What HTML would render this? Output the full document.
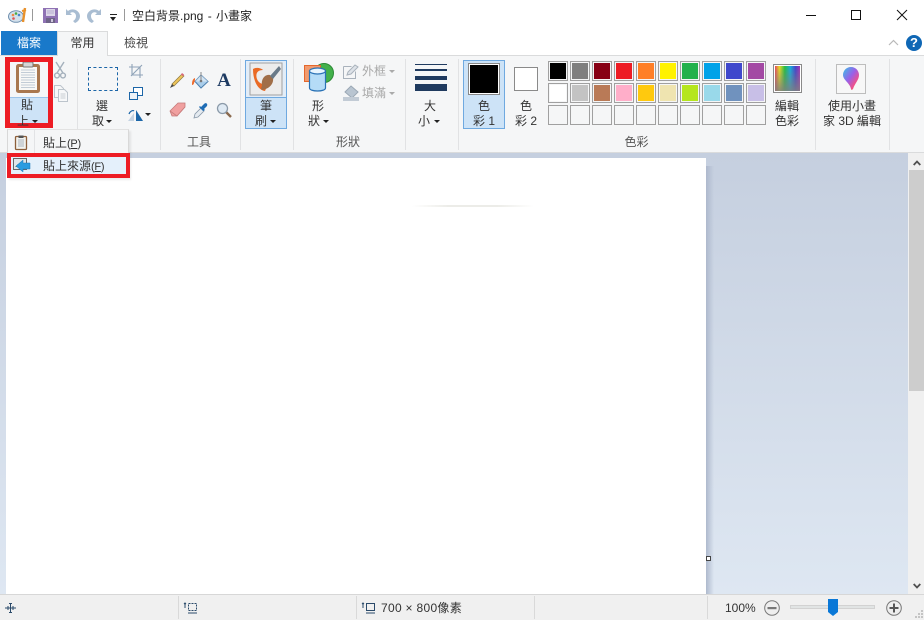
<!DOCTYPE html>
<html lang="zh-Hant"><head><meta charset="utf-8"><title>小畫家</title>
<style>
html,body{margin:0;padding:0;width:924px;height:620px;overflow:hidden;background:#fff}
body{position:relative;font-family:"Liberation Sans","Noto Sans CJK TC",sans-serif;font-size:12px;color:#3c3c3c}
.a{position:absolute}
.t{position:absolute;white-space:nowrap;line-height:16px;text-align:center}
.sep{position:absolute;top:59px;height:91px;width:1px;background:#e1e2e4}
.sw{position:absolute;width:18px;height:18px;border:1px solid #a0a0a0;box-sizing:content-box}
.sw i{position:absolute;left:1px;top:1px;width:16px;height:16px;display:block}
.l{color:#555;text-align:center;position:absolute;top:134px;line-height:16px;white-space:nowrap}
svg{position:absolute;overflow:visible}
.car{position:absolute;width:0;height:0;border-left:3px solid transparent;border-right:3px solid transparent;border-top:3px solid #222}
.p{font-size:11px;letter-spacing:-.3px}
</style></head><body>

<!-- title bar -->
<svg style="left:8px;top:6px" width="20" height="18" viewBox="0 0 20 18"><ellipse cx="8" cy="10.500" rx="7.500" ry="5.800" fill="#d3e0ec" stroke="#6f8fae"/><circle cx="5" cy="9" r="1.300" fill="#e84"/><circle cx="8" cy="7.500" r="1.300" fill="#4a4"/><circle cx="11" cy="9" r="1.300" fill="#48c"/><circle cx="5.500" cy="12.500" r="1.300" fill="#d55"/><path d="M15 16L17 2" stroke="#e8912b" stroke-width="2.400"/><path d="M14 5l4-1" stroke="#e8912b" stroke-width="2"/></svg>
<div class="a" style="left:32px;top:9px;width:1px;height:12px;background:#999"></div>
<svg style="left:43px;top:8px" width="15" height="15" viewBox="0 0 15 15"><rect width="15" height="15" fill="#8f72b4"/><rect x="3" y="1" width="9" height="7" fill="#dcd6e8"/><path d="M4 3h7M4 5h7" stroke="#b8aed0"/><rect x="3" y="10" width="9" height="5" fill="#6f6488"/><rect x="8" y="11" width="2" height="3" fill="#cfc8dc"/></svg>
<svg style="left:65px;top:8px" width="15" height="15" viewBox="0 0 15 15"><path d="M1 1v6h6L5 5c3-2 6 0 6 3 0 2-1 4-3 5l2 2c3-1 5-4 5-7C15 3 8-1 3 3z" fill="#a9bdd2"/></svg>
<svg style="left:87px;top:8px" width="15" height="15" viewBox="0 0 15 15"><path d="M14 1v6H8l2-2C7 3 4 5 4 8c0 2 1 4 3 5l-2 2C2 14 0 11 0 8 0 3 7-1 12 3z" fill="#a9bdd2"/></svg>
<div class="a" style="left:110px;top:14px;width:7px;height:1px;background:#222"></div>
<div class="car" style="left:110px;top:17px;border-left-width:3.500px;border-right-width:3.500px;border-top-width:4px"></div>
<div class="a" style="left:124px;top:9px;width:1px;height:12px;background:#999"></div>
<div class="t" style="left:132px;top:8px;font-size:12px;color:#222;word-spacing:1px">空白背景.png - 小畫家</div>
<svg style="left:806px;top:9px" width="110" height="14" viewBox="0 0 110 14" fill="none" stroke="#111" stroke-width="1"><path d="M0 6.500h10"/><rect x="45.500" y="1.500" width="9" height="9"/><path d="M91 1l10 10M101 1L91 11"/></svg>

<!-- tabs -->
<div class="a" style="left:1px;top:31px;width:56px;height:24px;background:#1979ca"></div>
<div class="t" style="left:1px;top:35px;width:56px;color:#fff;font-size:12px">檔案</div>
<div class="a" style="left:57px;top:31px;width:51px;height:25px;background:#f5f6f7;border:1px solid #dadbdc;border-bottom:0;box-sizing:border-box;z-index:2"></div>
<div class="t" style="left:57px;top:35px;width:51px;color:#333;z-index:3">常用</div>
<div class="t" style="left:108px;top:35px;width:56px;color:#444">檢視</div>
<svg style="left:888px;top:39px" width="11" height="7" viewBox="0 0 11 7" fill="none" stroke="#b9b9b9" stroke-width="1.200"><path d="M1 6l4.500-4.500L10 6"/></svg>
<div class="a" style="left:906px;top:35px;width:16px;height:16px;border-radius:50%;background:#0f67b5;color:#fff;font:bold 13px/16px 'Liberation Sans',sans-serif;text-align:center">?</div>

<!-- ribbon -->
<div class="a" style="left:0;top:55px;width:924px;height:98px;background:#f5f6f7;border-top:1px solid #dadbdc;border-bottom:1px solid #dadbdc;box-sizing:border-box"></div>
<div class="sep" style="left:77px"></div><div class="sep" style="left:160px"></div><div class="sep" style="left:240px"></div><div class="sep" style="left:293px"></div><div class="sep" style="left:405px"></div><div class="sep" style="left:458px"></div><div class="sep" style="left:815px"></div><div class="sep" style="left:889px"></div>

<!-- paste -->
<div class="a" style="left:10px;top:97px;width:39px;height:30px;background:#cde3f7"></div>
<div class="a" style="left:10px;top:97px;width:39px;height:1px;background:#9cc4ea"></div>
<svg style="left:16px;top:62px" width="24" height="31" viewBox="0 0 24 31"><rect y="2" width="24" height="29" rx="2.500" fill="#a9774e"/><rect x="3" y="5" width="18" height="23" fill="#f8f8f6"/><path d="M5 8h14M5 10.500h14M5 13h14M5 15.500h14M5 18h14M5 20.500h14M5 23h14M5 25.500h14" stroke="#c2ccd6"/><rect x="7" y="0" width="10" height="5" rx="1" fill="#d6d6d6" stroke="#777"/></svg>
<div class="t" style="left:10px;top:97px;width:34px;color:#333">貼</div>
<div class="t" style="left:6px;top:113px;width:34px;color:#333;z-index:7">上</div>
<div class="car" style="left:32px;top:120px;z-index:7"></div>
<!-- red box -->
<div class="a" style="left:5px;top:57px;width:48px;height:71px;border:5px solid #ed1c24;box-sizing:border-box;z-index:6"></div>
<svg style="left:54px;top:62px" width="12" height="17" viewBox="0 0 12 17" fill="none" stroke="#a4b0bc" stroke-width="1.400"><path d="M2 0l7 11M10 0L3 11"/><circle cx="3" cy="13.500" r="2.400"/><circle cx="9" cy="13.500" r="2.400"/></svg>
<svg style="left:54px;top:85px" width="14" height="17" viewBox="0 0 14 17" fill="#f7f8f9" stroke="#bcc4cc"><path d="M.5.5h6l3 3v9h-9z"/><path d="M4.500 4.500h6l3 3v9h-9z"/><path d="M6.500 9h5M6.500 11h5M6.500 13h5" stroke="#c9ced4"/></svg>

<!-- select -->
<div class="a" style="left:88px;top:67px;width:30px;height:24px;border:1px dashed #1c66a8;box-sizing:border-box"></div>
<div class="t" style="left:85px;top:98px;width:34px;color:#333">選</div>
<div class="t" style="left:81px;top:113px;width:34px;color:#333">取</div>
<div class="car" style="left:106px;top:120px"></div>
<svg style="left:129px;top:64px" width="14" height="14" viewBox="0 0 14 14" fill="none" stroke="#8fa3b8" stroke-width="1.100"><path d="M0 3h11v11M3 0v11h11M2 12L13 1"/></svg>
<svg style="left:129px;top:87px" width="14" height="13" viewBox="0 0 14 13"><rect x="4.500" y=".5" width="9" height="8" fill="#fff" stroke="#1c66a8"/><rect x=".5" y="5.500" width="8" height="7" fill="#eef3f8" stroke="#1c66a8"/></svg>
<svg style="left:128px;top:109px" width="16" height="12" viewBox="0 0 16 12"><path d="M8 1l7 11H8z" fill="#1c66a8"/><path d="M6 4L0 12h6z" fill="#c4d3e2"/><path d="M1 5C2 2 5 1 6 2" fill="none" stroke="#1c66a8" stroke-width="1.200"/></svg>
<div class="car" style="left:145px;top:113px"></div>

<!-- tools -->
<svg style="left:169px;top:72px" width="16" height="17" viewBox="0 0 16 17"><path d="M3 12L13 2l2 2L5 14z" fill="#edc45a" stroke="#8d7a40" stroke-width=".7"/><path d="M12 2.500l1-1.500 2 1.500-1 2z" fill="#d9687b"/><path d="M3 12l-2 4 4-2z" fill="#444"/></svg>
<svg style="left:191px;top:71px" width="18" height="18" viewBox="0 0 18 18"><path d="M10 4l7 6.500-7 6.500-6-6.500z" fill="#a9cdea" stroke="#4c7fae"/><path d="M4 10.500L10 4h0l7 6.500z" fill="#e6f0f8" opacity=".7"/><path d="M10 10V1" stroke="#888"/><circle cx="10" cy="10" r="1.300" fill="#777"/><path d="M4 7C1 8 1 12 1 14c2 0 2-2 3-5z" fill="#ef6a2b"/></svg>
<div class="a" style="left:216px;top:70px;width:16px;font:bold 19px/21px 'Liberation Serif',serif;color:#1d3a62;text-align:center">A</div>
<svg style="left:169px;top:102px" width="17" height="15" viewBox="0 0 17 15"><path d="M1 9L9 1h7l0 4-8 9H3z" fill="#f0a0a0" stroke="#c47a7a" stroke-width=".8"/><path d="M1 9l7 5 8-9" fill="none" stroke="#c97c7c" stroke-width=".8"/></svg>
<svg style="left:193px;top:102px" width="16" height="17" viewBox="0 0 16 17"><path d="M1 16l1-4 6-6 3 3-6 6z" fill="#e4eaf0" stroke="#8797a8" stroke-width=".8"/><path d="M8 5l3-3c2-2 4 0 3 2l-3 3 1 1-2 1-4-4 1-1z" fill="#1e6cb5"/></svg>
<svg style="left:216px;top:102px" width="16" height="16" viewBox="0 0 16 16"><path d="M10 10l5 5" stroke="#8a6a4f" stroke-width="2.400"/><circle cx="6.500" cy="6.500" r="5" fill="#dfeaf4" stroke="#8b9aa9" stroke-width="1.300"/></svg>

<!-- brushes -->
<div class="a" style="left:245px;top:60px;width:42px;height:69px;background:#cde3f7;border:1px solid #6fa9e0;box-sizing:border-box"></div>
<div class="a" style="left:246px;top:61px;width:40px;height:36px;background:#e2edf8;border-bottom:1px solid #6fa9e0"></div>
<svg style="left:250px;top:63px" width="32" height="32" viewBox="0 0 32 32"><rect width="32" height="32" fill="#ececec" stroke="#a0a0a0"/><path d="M3 6C6 4 11 5 13 7 8 7 5 10 7 16c2 5 7 6 11 5l-3 7C8 27 3 18 3 6z" fill="#ea6a24"/><path d="M12 22c-1-6 3-11 8-10l3 3c1 6-4 11-11 12-2-1 0-3 0-5z" fill="#a06e48"/><path d="M20 13L29 3l2 3-8 10z" fill="#6a7a88"/></svg>
<div class="t" style="left:246px;top:98px;width:40px;color:#333">筆</div>
<div class="t" style="left:241px;top:113px;width:40px;color:#333">刷</div>
<div class="car" style="left:270px;top:120px"></div>

<!-- shapes -->
<svg style="left:304px;top:62px" width="30" height="30" viewBox="0 0 30 30"><circle cx="20" cy="11" r="9.500" fill="#43b14b" stroke="#2c8a36"/><rect x=".5" y="3.500" width="16" height="16" fill="#f19a6e" stroke="#e5672c"/><path d="M5.500 9v17c0 4 16 4 16 0V9z" fill="#b5dcf7" stroke="#2a72b5" stroke-width="1.200"/><ellipse cx="13.500" cy="9" rx="8" ry="3" fill="#e8f5fe" stroke="#2a72b5" stroke-width="1.200"/></svg>
<div class="t" style="left:301px;top:98px;width:34px;color:#333">形</div>
<div class="t" style="left:297px;top:113px;width:34px;color:#333">狀</div>
<div class="car" style="left:323px;top:120px"></div>
<svg style="left:343px;top:64px" width="16" height="15" viewBox="0 0 16 15" fill="none" stroke="#a9b2bc"><path d="M.5 2.500h8M.5 2.500v12h12v-7"/><path d="M4 11l1-3 7-7 3 2-7 7z" fill="#dde2e8"/></svg>
<div class="t" style="left:362px;top:63px;color:#a8a8a8">外框</div>
<div class="car" style="left:389px;top:70px;border-top-color:#aaa"></div>
<svg style="left:343px;top:85px" width="16" height="16" viewBox="0 0 16 16"><path d="M8 1l7 6-6 6-7-6z" fill="#b9c5d1" stroke="#9aa7b4"/><rect y="12" width="16" height="4" fill="#c2cbd5"/></svg>
<div class="t" style="left:362px;top:85px;color:#a8a8a8">填滿</div>
<div class="car" style="left:389px;top:92px;border-top-color:#aaa"></div>

<!-- size -->
<div class="a" style="left:415px;top:64px;width:32px;height:1px;background:#1f3a5f"></div>
<div class="a" style="left:415px;top:69px;width:32px;height:2px;background:#1f3a5f"></div>
<div class="a" style="left:415px;top:76px;width:32px;height:4px;background:#1f3a5f"></div>
<div class="a" style="left:415px;top:84px;width:32px;height:7px;background:#1f3a5f"></div>
<div class="t" style="left:413px;top:98px;width:34px;color:#333">大</div>
<div class="t" style="left:407px;top:113px;width:34px;color:#333">小</div>
<div class="car" style="left:434px;top:120px"></div>

<!-- colors -->
<div class="a" style="left:463px;top:60px;width:42px;height:69px;background:#cde3f7;border:1px solid #6fa9e0;box-sizing:border-box"></div>
<div class="a" style="left:468px;top:63px;width:32px;height:32px;background:#000;border:1px solid #888;outline:1px solid #fff;outline-offset:-2px;box-sizing:border-box"></div>
<div class="t" style="left:463px;top:98px;width:42px;color:#333">色</div>
<div class="t" style="left:463px;top:113px;width:42px;color:#333">彩 1</div>
<div class="a" style="left:514px;top:67px;width:24px;height:24px;background:#fff;border:1px solid #8a8a8a;box-sizing:border-box"></div>
<div class="t" style="left:505px;top:98px;width:42px;color:#333">色</div>
<div class="t" style="left:505px;top:113px;width:42px;color:#333">彩 2</div>

<div class="sw" style="left:548px;top:61px"><i style="background:#000"></i></div><div class="sw" style="left:570px;top:61px"><i style="background:#7f7f7f"></i></div><div class="sw" style="left:592px;top:61px"><i style="background:#880015"></i></div><div class="sw" style="left:614px;top:61px"><i style="background:#ed1c24"></i></div><div class="sw" style="left:636px;top:61px"><i style="background:#ff7f27"></i></div><div class="sw" style="left:658px;top:61px"><i style="background:#fff200"></i></div><div class="sw" style="left:680px;top:61px"><i style="background:#22b14c"></i></div><div class="sw" style="left:702px;top:61px"><i style="background:#00a2e8"></i></div><div class="sw" style="left:724px;top:61px"><i style="background:#3f48cc"></i></div><div class="sw" style="left:746px;top:61px"><i style="background:#a349a4"></i></div>
<div class="sw" style="left:548px;top:83px"><i style="background:#fff"></i></div><div class="sw" style="left:570px;top:83px"><i style="background:#c3c3c3"></i></div><div class="sw" style="left:592px;top:83px"><i style="background:#b97a57"></i></div><div class="sw" style="left:614px;top:83px"><i style="background:#ffaec9"></i></div><div class="sw" style="left:636px;top:83px"><i style="background:#ffc90e"></i></div><div class="sw" style="left:658px;top:83px"><i style="background:#efe4b0"></i></div><div class="sw" style="left:680px;top:83px"><i style="background:#b5e61d"></i></div><div class="sw" style="left:702px;top:83px"><i style="background:#99d9ea"></i></div><div class="sw" style="left:724px;top:83px"><i style="background:#7092be"></i></div><div class="sw" style="left:746px;top:83px"><i style="background:#c8bfe7"></i></div>
<div class="sw" style="left:548px;top:105px"></div><div class="sw" style="left:570px;top:105px"></div><div class="sw" style="left:592px;top:105px"></div><div class="sw" style="left:614px;top:105px"></div><div class="sw" style="left:636px;top:105px"></div><div class="sw" style="left:658px;top:105px"></div><div class="sw" style="left:680px;top:105px"></div><div class="sw" style="left:702px;top:105px"></div><div class="sw" style="left:724px;top:105px"></div><div class="sw" style="left:746px;top:105px"></div>

<div class="a" style="left:773px;top:64px;width:29px;height:29px;border:1px solid #8a8a8a;box-sizing:border-box;background:linear-gradient(to bottom,rgba(128,128,128,0) 0,rgba(128,128,128,.9) 100%),linear-gradient(to right,#e81c6a,#f0e020,#20c040,#10b0e0,#4040d0,#c030b0);outline:1px solid #fff;outline-offset:-2px"></div>
<div class="t" style="left:767px;top:98px;width:40px;color:#333">編輯</div>
<div class="t" style="left:767px;top:113px;width:40px;color:#333">色彩</div>

<div class="a" style="left:836px;top:64px;width:30px;height:30px;background:#f7f7f7;border:1px solid #bdbdbd;box-sizing:border-box"></div>
<svg style="left:842px;top:66px" width="18" height="25" viewBox="0 0 18 25"><defs><linearGradient id="g" x1="0" y1="0" x2="1" y2="1"><stop offset="0" stop-color="#35c4e8"/><stop offset=".45" stop-color="#9a60e8"/><stop offset=".75" stop-color="#f0508a"/><stop offset="1" stop-color="#f5a020"/></linearGradient></defs><path d="M9 1c5 0 8 4 8 8 0 5-4 8-6 14-1 1-2 1-2 0C8 17 1 14 1 9c0-4 3-8 8-8z" fill="url(#g)"/></svg>
<div class="t" style="left:815px;top:98px;width:74px;color:#333">使用小畫</div>
<div class="t" style="left:815px;top:113px;width:74px;color:#333">家 3D 編輯</div>

<div class="l" style="left:160px;width:78px">工具</div>
<div class="l" style="left:293px;width:110px">形狀</div>
<div class="l" style="left:458px;width:357px">色彩</div>

<!-- canvas area -->
<div class="a" style="left:0;top:153px;width:908px;height:441px;background:linear-gradient(#c5cfdf,#dee7f2)"></div>
<div class="a" style="left:6px;top:158px;width:700px;height:436px;background:#fff"></div>
<div class="a" style="left:706px;top:166px;width:8px;height:428px;background:linear-gradient(to right,#aeb9cd,rgba(190,200,220,0))"></div>
<div class="a" style="left:412px;top:205px;width:122px;height:2px;background:linear-gradient(to right,#fff,#ecece8 30%,#ecece8 70%,#fff)"></div>
<div class="a" style="left:706px;top:556px;width:5px;height:5px;background:#fff;border:1px solid #444;box-sizing:border-box"></div>

<!-- scrollbar -->
<div class="a" style="left:908px;top:153px;width:16px;height:441px;background:#f0f0f0"></div>
<div class="a" style="left:909px;top:170px;width:15px;height:221px;background:#cdcdcd"></div>
<svg style="left:913px;top:160px" width="8" height="6" viewBox="0 0 8 6" fill="none" stroke="#505050" stroke-width="1.800"><path d="M.7 5L4 1.500 7.300 5"/></svg>
<svg style="left:913px;top:583px" width="8" height="6" viewBox="0 0 8 6" fill="none" stroke="#505050" stroke-width="1.800"><path d="M.7 1L4 4.500 7.300 1"/></svg>

<!-- dropdown -->
<div class="a" style="left:7px;top:129px;width:122px;height:49px;background:#f5f6f7;border:1px solid #d8d8d8;border-top-color:#e2e2e2;box-sizing:border-box;box-shadow:2px 2px 2px rgba(0,0,0,.08);z-index:4"></div>
<div class="a" style="left:34px;top:130px;width:1px;height:24px;background:#e2e3e5;z-index:5"></div>
<svg style="left:15px;top:135px;z-index:5" width="12" height="15" viewBox="0 0 12 15"><rect x=".5" y="1.500" width="11" height="13" rx="1" fill="#f2f2ee" stroke="#8d5f3a" stroke-width="1.300"/><path d="M3 5h6M3 7h6M3 9h6M3 11h6" stroke="#aab4be"/><rect x="3.500" y=".5" width="5" height="2.500" fill="#555"/></svg>
<div class="t" style="left:43px;top:135px;color:#333;z-index:5">貼上<span class="p">(<u>P</u>)</span></div>
<div class="a" style="left:10px;top:156px;width:116px;height:18px;background:#e4f0fb;z-index:5"></div>
<svg style="left:13px;top:158px;z-index:6" width="17" height="15" viewBox="0 0 17 15"><rect x=".5" y=".5" width="13" height="11" fill="#dfe6ea" stroke="#666"/><path d="M2 9l3-3 3 3z" fill="#5a8a5a"/><path d="M17 5H10V2L3 8l7 6v-3h7z" fill="#2a9ce0" stroke="#1a78b8" stroke-width=".5"/></svg>
<div class="t" style="left:43px;top:158px;color:#333;z-index:6">貼上來源<span class="p">(<u>F</u>)</span></div>
<div class="a" style="left:7px;top:153px;width:123px;height:25px;border:4px solid #ed1c24;box-sizing:border-box;z-index:7"></div>

<!-- status bar -->
<div class="a" style="left:0;top:594px;width:924px;height:26px;background:#f0f0f0;border-top:1px solid #d7d7d7;box-sizing:border-box"></div>
<div class="a" style="left:178px;top:596px;width:1px;height:23px;background:#d9d9d9"></div>
<div class="a" style="left:356px;top:596px;width:1px;height:23px;background:#d9d9d9"></div>
<div class="a" style="left:534px;top:596px;width:1px;height:23px;background:#d9d9d9"></div>
<div class="a" style="left:707px;top:596px;width:1px;height:23px;background:#d9d9d9"></div>
<svg style="left:5px;top:602px" width="12" height="12" viewBox="0 0 12 12" fill="none" stroke="#2a4a6a"><path d="M0 6h11M5.500 1v10"/><path d="M3 4v4M8 4v4M4 1.500h3M4 10.500h3"/></svg>
<svg style="left:184px;top:602px" width="14" height="12" viewBox="0 0 14 12" fill="none" stroke="#2a4a6a"><path d="M1 6V1M0 2l1-1 1 1"/><rect x="4.500" y="1.500" width="8" height="7" stroke-dasharray="2 1"/><path d="M4 11h9"/></svg>
<svg style="left:362px;top:602px" width="14" height="12" viewBox="0 0 14 12" fill="none" stroke="#2a4a6a"><path d="M1 6V1M0 2l1-1 1 1"/><rect x="4.500" y="1.500" width="8" height="7"/><path d="M4 11h9"/></svg>
<div class="t" style="left:381px;top:600px;color:#333;font-size:12px;letter-spacing:.3px">700 × 800像素</div>
<div class="t" style="left:725px;top:600px;color:#333;font-size:12px">100%</div>
<svg style="left:764px;top:600px" width="16" height="16" viewBox="0 0 16 16"><circle cx="8" cy="8" r="7.300" fill="#eee" stroke="#777"/><rect x="3.500" y="7" width="9" height="2.200" fill="#777"/></svg>
<div class="a" style="left:790px;top:605px;width:85px;height:4px;background:#e1e4e4;border:1px solid #d2d2d2;box-sizing:border-box"></div>
<svg style="left:828px;top:599px" width="10" height="17" viewBox="0 0 10 17"><path d="M0 0h10v13l-5 4-5-4z" fill="#0a78d7"/></svg>
<svg style="left:886px;top:600px" width="16" height="16" viewBox="0 0 16 16"><circle cx="8" cy="8" r="7.300" fill="#eee" stroke="#777"/><path d="M3.500 8h9M8 3.500v9" stroke="#555" stroke-width="2"/></svg>
<svg style="left:915px;top:610px" width="9" height="9" viewBox="0 0 9 9" fill="#c4c4c4"><rect x="6" y="0" width="2" height="2"/><rect x="3" y="3" width="2" height="2"/><rect x="6" y="3" width="2" height="2"/><rect x="0" y="6" width="2" height="2"/><rect x="3" y="6" width="2" height="2"/><rect x="6" y="6" width="2" height="2"/></svg>
</body></html>
